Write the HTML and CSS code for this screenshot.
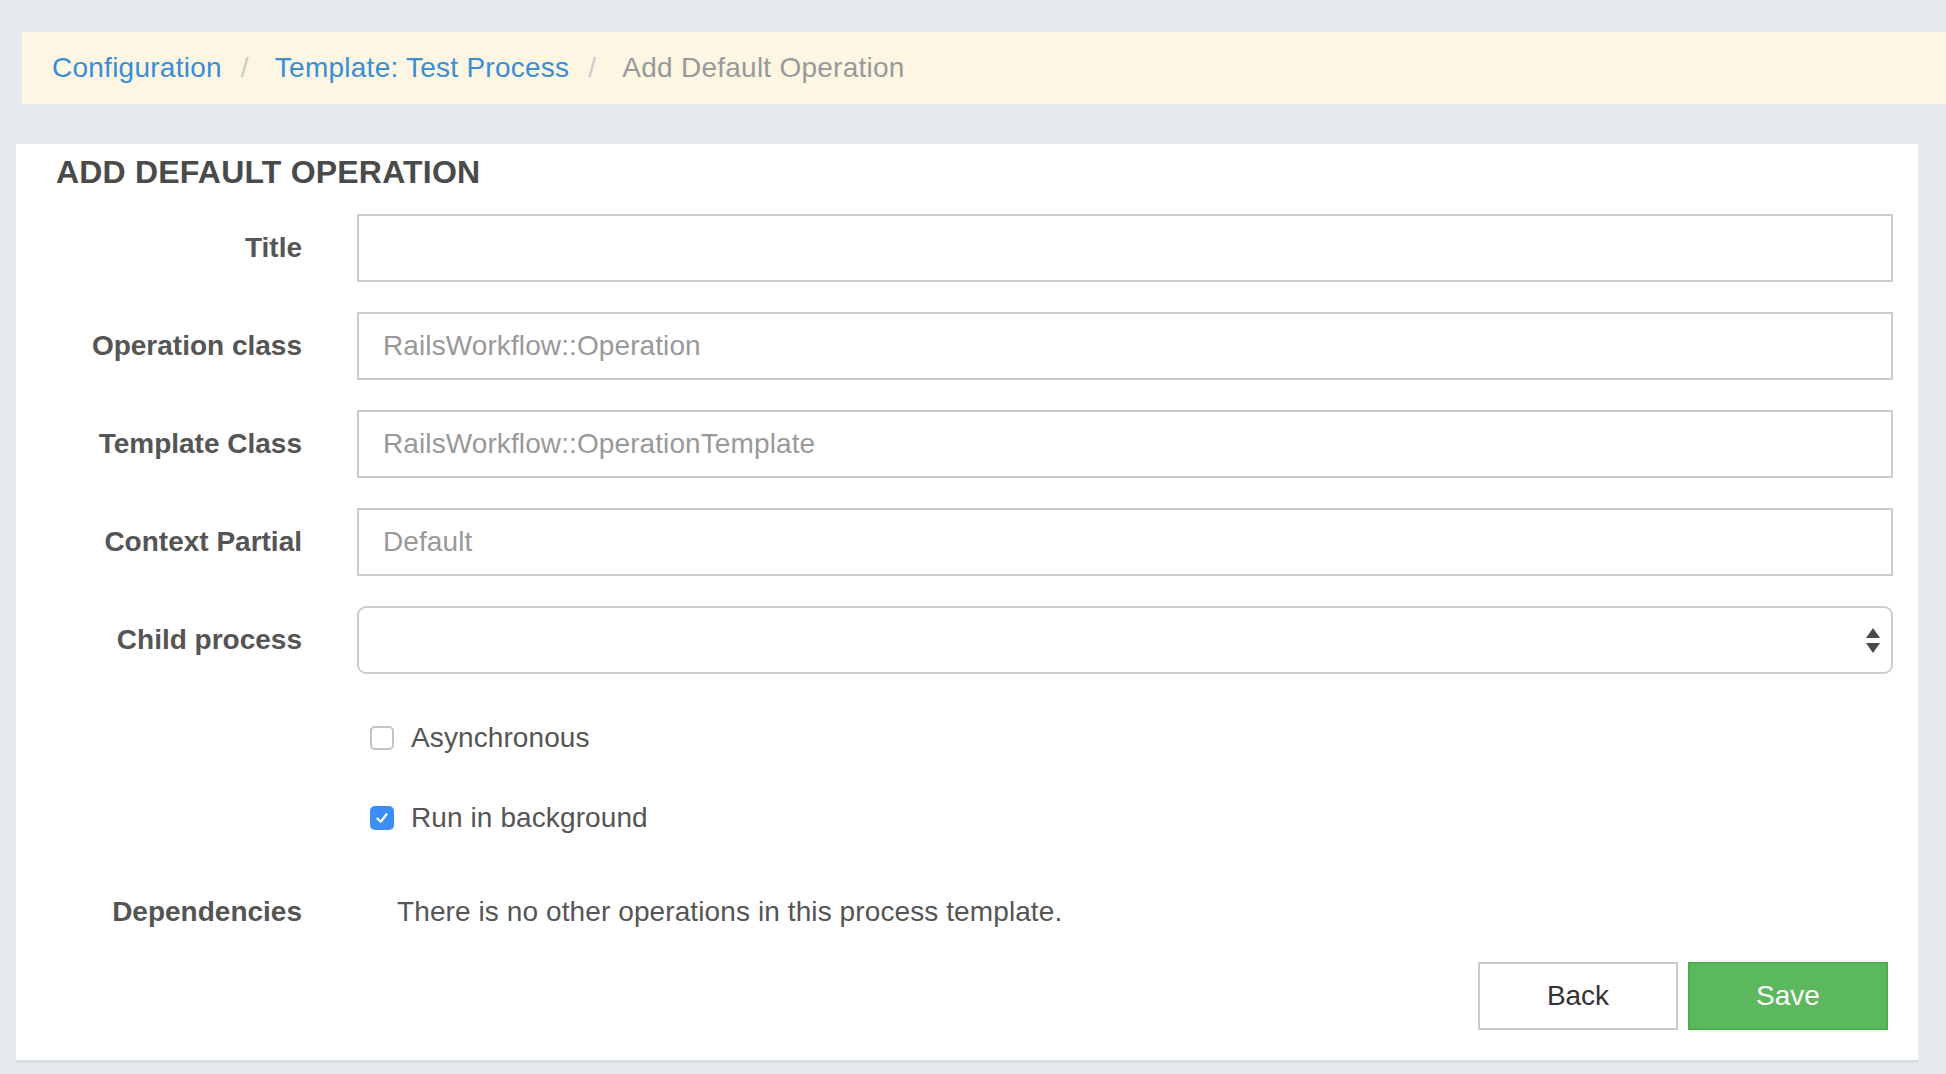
FILE: index.html
```html
<!DOCTYPE html>
<html lang="en">
<head>
<meta charset="utf-8">
<title>Add Default Operation</title>
<link rel="stylesheet" href="styles.css">
</head>
<body>
<nav class="breadcrumb">
  <a class="crumb-link" href="#">Configuration</a><span class="crumb-sep">/</span><a class="crumb-link" href="#">Template: Test Process</a><span class="crumb-sep">/</span><span class="crumb-active">Add Default Operation</span>
</nav>
<main class="card">
  <h2 class="card-title">ADD DEFAULT OPERATION</h2>
  <form class="form">
    <div class="form-row">
      <label class="form-label">Title</label>
      <input class="form-input" type="text">
    </div>
    <div class="form-row">
      <label class="form-label">Operation class</label>
      <input class="form-input" type="text" placeholder="RailsWorkflow::Operation">
    </div>
    <div class="form-row">
      <label class="form-label">Template Class</label>
      <input class="form-input" type="text" placeholder="RailsWorkflow::OperationTemplate">
    </div>
    <div class="form-row">
      <label class="form-label">Context Partial</label>
      <input class="form-input" type="text" placeholder="Default">
    </div>
    <div class="form-row">
      <label class="form-label">Child process</label>
      <div class="select">
        <span class="select-arrows"><span class="arrow-up"></span><span class="arrow-down"></span></span>
      </div>
    </div>
    <div class="form-row check-row">
      <span class="form-label"></span>
      <label class="check"><span class="checkbox"></span>Asynchronous</label>
    </div>
    <div class="form-row check-row">
      <span class="form-label"></span>
      <label class="check"><span class="checkbox checked"><svg viewBox="0 0 24 24" width="24" height="24"><path d="M6.5 12.5 L10.5 16.5 L17.5 7.5" fill="none" stroke="#fff" stroke-width="2.6" stroke-linecap="round" stroke-linejoin="round"/></svg></span>Run in background</label>
    </div>
    <div class="form-row deps-row">
      <span class="form-label">Dependencies</span>
      <p class="form-static">There is no other operations in this process template.</p>
    </div>
    <div class="form-actions">
      <button class="btn btn-default" type="button">Back</button>
      <button class="btn btn-success" type="button">Save</button>
    </div>
  </form>
</main>
</body>
</html>
```

FILE: styles.css
```css
html, body {
  margin: 0;
  padding: 0;
}
body {
  background: #e6eaed;
  font-family: "Liberation Sans", Arial, Helvetica, sans-serif;
  font-size: 28px;
  color: #555;
  padding-top: 32px;
  padding-bottom: 11px;
}
.breadcrumb {
  margin-left: 22px;
  height: 72px;
  line-height: 72px;
  padding-left: 30px;
  background: #fdf6e3;
  white-space: nowrap;
  letter-spacing: 0.25px;
}
.crumb-link {
  color: #3a8dd6;
  text-decoration: none;
}
.crumb-sep {
  color: #ccc;
  padding: 0 26px 0 19px;
}
.crumb-active {
  color: #999;
}
.card {
  margin: 40px 28px 0 16px;
  background: #fff;
  padding: 10px 25px 30px 40px;
  border-bottom: 3px solid #d9dee2;
}
.card-title {
  margin: 0 0 24px 0;
  font-size: 32px;
  line-height: 36px;
  letter-spacing: 0.2px;
  font-weight: bold;
  color: #4a4a4a;
}
.form-row {
  display: grid;
  grid-template-columns: 246px 1536px;
  column-gap: 55px;
  align-items: center;
  height: 68px;
  margin-bottom: 30px;
}
.form-label {
  text-align: right;
  font-weight: bold;
  color: #555;
}
.form-input {
  box-sizing: border-box;
  height: 68px;
  width: 100%;
  border: 2px solid #ccc;
  border-radius: 0;
  padding: 0 24px;
  font-family: inherit;
  font-size: 28px;
  letter-spacing: 0.1px;
  color: #555;
  background: #fff;
  outline: none;
}
.form-input::placeholder {
  color: #999;
}
.select {
  box-sizing: border-box;
  height: 68px;
  border: 2px solid #ccc;
  border-radius: 9px;
  background: #fff;
  display: flex;
  align-items: center;
  justify-content: flex-end;
  padding-right: 11px;
}
.select-arrows {
  display: flex;
  flex-direction: column;
  gap: 5px;
}
.arrow-up {
  width: 0;
  height: 0;
  border-left: 7px solid transparent;
  border-right: 7px solid transparent;
  border-bottom: 10px solid #4a4a4a;
}
.arrow-down {
  width: 0;
  height: 0;
  border-left: 7px solid transparent;
  border-right: 7px solid transparent;
  border-top: 10px solid #4a4a4a;
}
.check-row {
  margin-bottom: 12px;
}
.check {
  display: flex;
  align-items: center;
  padding-left: 13px;
  gap: 17px;
  color: #555;
  letter-spacing: 0.1px;
}
.checkbox {
  box-sizing: border-box;
  width: 24px;
  height: 24px;
  border: 2px solid #c4c4c4;
  border-radius: 5px;
  background: #fff;
  display: flex;
  align-items: center;
  justify-content: center;
}
.checkbox.checked {
  background: #3b8ef5;
  border-color: #3b8ef5;
}
.checkbox svg {
  display: block;
}
.deps-row {
  margin-top: 26px;
  margin-bottom: 16px;
}
.form-static {
  margin: 0 0 0 40px;
  color: #555;
  letter-spacing: 0.1px;
}
.form-actions {
  display: flex;
  justify-content: flex-end;
  gap: 10px;
  padding-right: 5px;
}
.btn {
  box-sizing: border-box;
  width: 200px;
  height: 68px;
  font-family: inherit;
  font-size: 28px;
  border-radius: 0;
  border: 2px solid #ccc;
  cursor: pointer;
}
.btn-default {
  background: #fff;
  color: #333;
}
.btn-success {
  background: #5cb85c;
  border-color: #4cae4c;
  color: #fff;
}
```
